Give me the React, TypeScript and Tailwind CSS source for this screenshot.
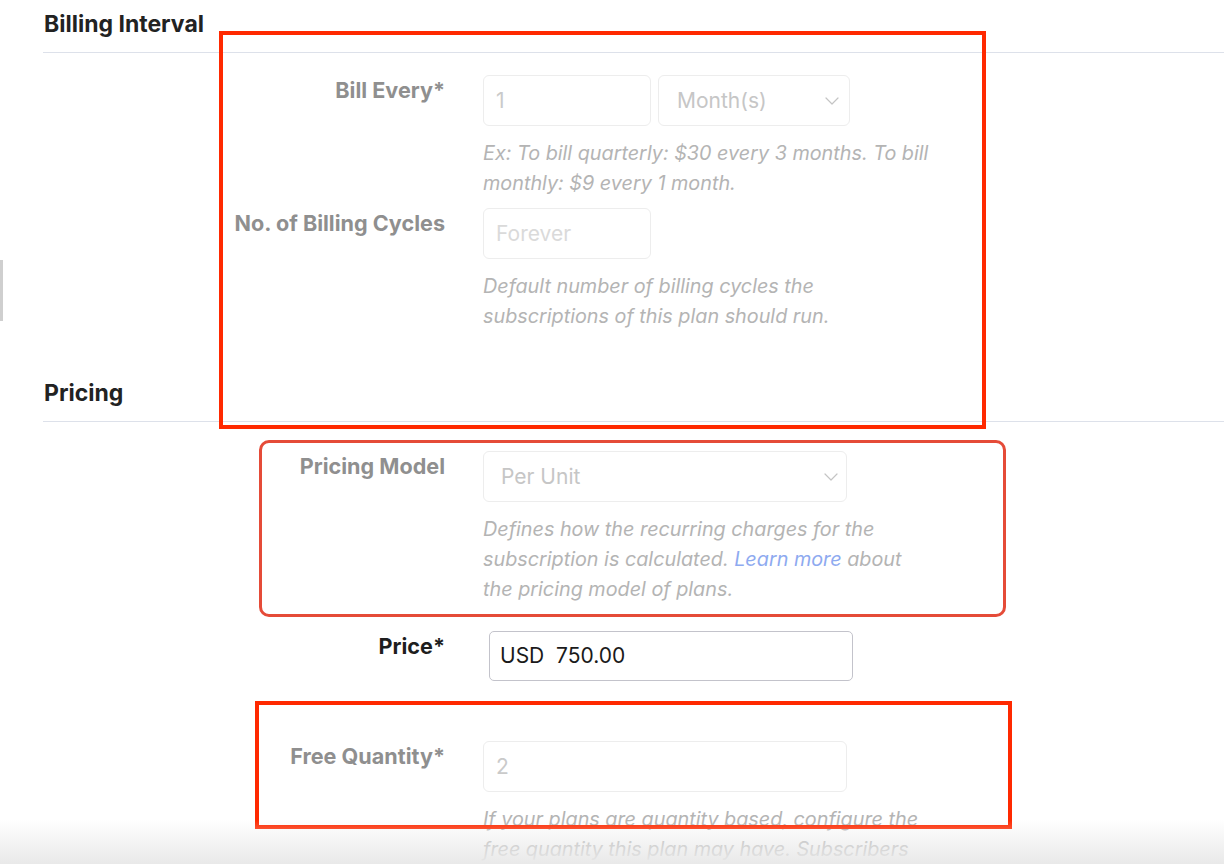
import React from 'react';

const labelCls = 'w-[402px] shrink-0 text-right text-[21.6px] leading-[28px] font-bold mt-px';

const Chevron = () => (
    <svg width="14" height="8" viewBox="0 0 14 8" fill="none" className="shrink-0">
        <path d="M1 1l6 6 6-6" stroke="#c4c4c4" strokeWidth="1.2" strokeLinecap="round" strokeLinejoin="round"/>
    </svg>
);

const Help = ({lines}: {lines: React.ReactNode[]}) => (
    <div className="mt-3 text-[19.8px] leading-[30px] italic text-[#b4b4b4]">
        {lines.map((line, i) => (
            <div key={i} className="whitespace-nowrap">{line}</div>
        ))}
    </div>
);

const Row = ({label, muted = true, children}: {label: string; muted?: boolean; children: React.ReactNode}) => (
    <div className="flex items-start gap-[38px]">
        <div className={labelCls + (muted ? ' text-[#8f8f8f]' : ' text-[#1e1e1e]')}>{label}</div>
        <div className="flex flex-col">{children}</div>
    </div>
);

const Heading = ({title, className}: {title: string; className?: string}) => (
    <div className={'border-b border-[#dde1ea] pb-[14px] ' + (className ?? '')}>
        <div className="pl-px text-[23px] leading-[28px] font-bold text-[#222]">{title}</div>
    </div>
);

const App = () => {
    return (
        <div
            className="relative w-[1224px] h-[864px] overflow-hidden bg-white"
            style={{fontFamily: 'Inter, "Noto Sans", sans-serif'}}
        >
            <div className="pl-[43px] pt-[10px]">
                <Heading title="Billing Interval"/>

                <div className="mt-[22px]">
                    <Row label="Bill Every*">
                        <div className="flex gap-[7px]">
                            <div className="w-[168px] h-[51px] rounded-md border border-[#ededed] px-3 flex items-center text-[21px] text-[#cacaca]">1</div>
                            <div className="w-[192px] h-[51px] rounded-md border border-[#ededed] pl-[18px] pr-[10px] flex items-center justify-between text-[21px] text-[#c6c6c6]">
                                <span>Month(s)</span>
                                <Chevron/>
                            </div>
                        </div>
                        <Help lines={[
                            'Ex: To bill quarterly: $30 every 3 months. To bill',
                            'monthly: $9 every 1 month.',
                        ]}/>
                    </Row>
                </div>

                <div className="mt-[10px]">
                    <Row label="No. of Billing Cycles">
                        <div className="w-[168px] h-[51px] rounded-md border border-[#ededed] px-3 flex items-center text-[21px] text-[#dadada]">Forever</div>
                        <Help lines={[
                            'Default number of billing cycles the',
                            'subscriptions of this plan should run.',
                        ]}/>
                    </Row>
                </div>

                <Heading title="Pricing" className="mt-[48px]"/>

                <div className="mt-[29px]">
                    <Row label="Pricing Model">
                        <div className="w-[364px] h-[51px] rounded-md border border-[#ededed] pl-[17px] pr-[8px] flex items-center justify-between text-[21px] text-[#c6c6c6]">
                            <span>Per Unit</span>
                            <Chevron/>
                        </div>
                        <Help lines={[
                            'Defines how the recurring charges for the',
                            <>subscription is calculated. <span className="text-[#8eaaf0]">Learn more</span> about</>,
                            'the pricing model of plans.',
                        ]}/>
                    </Row>
                </div>

                <div className="mt-[27px]">
                    <Row label="Price*" muted={false}>
                        <div className="ml-[6px] w-[364px] h-[50px] rounded-[5px] border-[1.5px] border-[#c3c3cb] px-[10px] flex items-center text-[21px] text-[#1a1a1a]">
                            USD&nbsp;&nbsp;750.00
                        </div>
                    </Row>
                </div>

                <div className="mt-[60px]">
                    <Row label="Free Quantity*">
                        <div className="w-[364px] h-[51px] rounded-md border border-[#ededed] px-3 flex items-center text-[21px] text-[#cacaca]">2</div>
                        <Help lines={[
                            'If your plans are quantity based, configure the',
                            'free quantity this plan may have. Subscribers',
                        ]}/>
                    </Row>
                </div>
            </div>

            {/* annotation boxes drawn over the form */}
            <div className="absolute left-[219px] top-[31px] w-[767px] h-[398px] border-4 border-[#ff2900]"/>
            <div className="absolute left-[259px] top-[440px] w-[747px] h-[177px] border-[3px] rounded-[10px] border-[#e54b38]"/>
            <div className="absolute left-[255px] top-[701px] w-[757px] h-[128px] border-4 border-[#ff2900]"/>

            {/* left edge scroll stub */}
            <div className="absolute left-0 top-[260px] w-[3px] h-[61px] bg-[#cfcfcf]"/>

            {/* bottom fade */}
            <div className="absolute left-0 bottom-0 w-full h-[44px] bg-linear-to-b from-white/0 to-[#e9e9e9]"/>
        </div>
    );
};

export default App;
